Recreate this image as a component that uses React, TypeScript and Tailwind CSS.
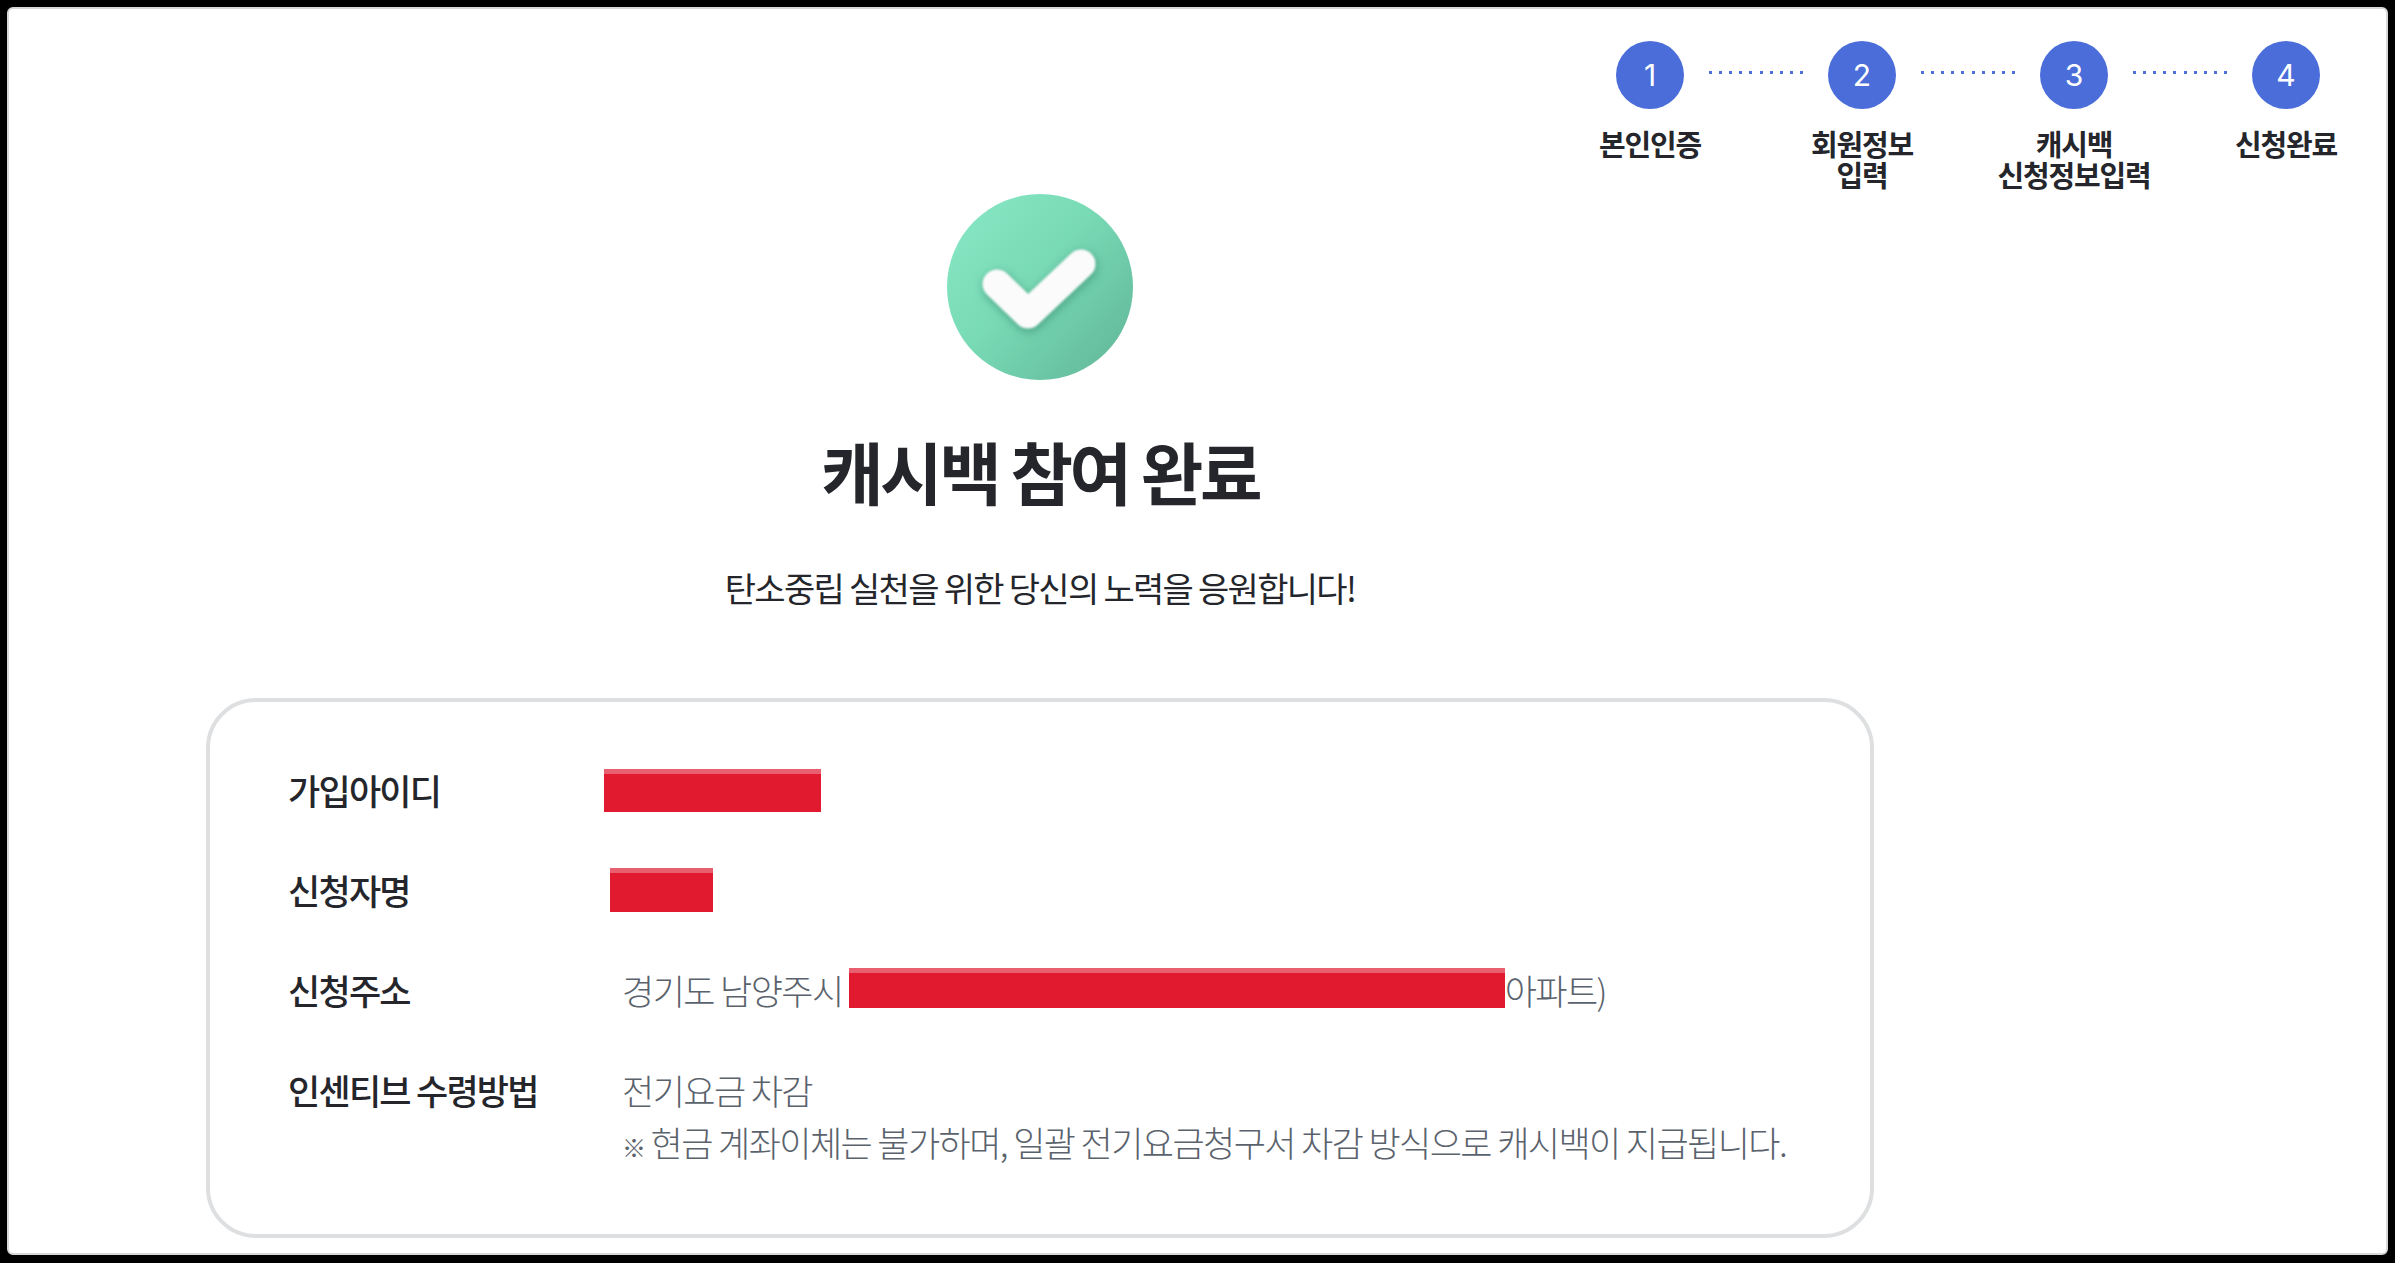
const font = { fontFamily: '"Noto Sans CJK KR", "Noto Sans", sans-serif' }

const steps = [
  { n: 1, label: ['본인인증'] },
  { n: 2, label: ['회원정보', '입력'] },
  { n: 3, label: ['캐시백', '신청정보입력'] },
  { n: 4, label: ['신청완료'] },
]

function Dots() {
  return (
    <div className="mt-[30px] mx-[25px] flex w-[94px] justify-between">
      {Array.from({ length: 10 }).map((_, i) => (
        <span key={i} className="size-[3px] bg-[#4b6fdb]" />
      ))}
    </div>
  )
}

function Stepper() {
  return (
    <div className="flex h-[184px] flex-col items-end pt-[32px] pr-[20px]">
      <div className="flex w-[796px] flex-col items-center">
        <div className="flex items-start">
          {steps.map((s, i) => (
            <div key={s.n} className="flex items-start">
              <div className="flex size-[68px] items-center justify-center rounded-full bg-[#4a6dd9] text-[30px] font-normal text-white">
                <span style={{ fontFamily: 'Inter, sans-serif' }}>{s.n}</span>
              </div>
              {i < 3 && <Dots />}
            </div>
          ))}
        </div>
        <div className="mt-[19px] flex gap-[52px]">
          {steps.map(s => (
            <div key={s.n} className="w-[160px] text-center text-[29px] leading-[31px] font-bold tracking-[-0.04em] text-[#24262b]">
              {s.label.map(l => (
                <div key={l}>{l}</div>
              ))}
            </div>
          ))}
        </div>
      </div>
    </div>
  )
}

function CheckBadge() {
  return (
    <svg width="188" height="188" viewBox="0 0 188 188">
      <defs>
        <linearGradient id="badge" x1="0.1" y1="0.1" x2="0.95" y2="0.85">
          <stop offset="0" stopColor="#86e6c3" />
          <stop offset="0.45" stopColor="#78d9b5" />
          <stop offset="1" stopColor="#64bb9c" />
        </linearGradient>
      </defs>
      <circle cx="94" cy="94" r="93" fill="url(#badge)" />
      <path d="M51 91 L82 121 L135 71" fill="none" stroke="#3b9274" strokeOpacity="0.6" strokeWidth="31" strokeLinecap="round" strokeLinejoin="round" className="blur-[4px]" transform="translate(1 3)" />
      <path d="M51 91 L82 121 L135 71" fill="none" stroke="#fbfbfb" strokeWidth="29" strokeLinecap="round" strokeLinejoin="round" className="blur-[1px]" />
    </svg>
  )
}

function Row({ label, children }: { label: string; children: React.ReactNode }) {
  return (
    <div className="flex items-start">
      <div className="w-[334px] shrink-0 text-[35px] leading-[53px] font-medium tracking-[-0.05em] text-[#24262b]">{label}</div>
      <div className="min-h-[53px] text-[35px] leading-[53px] font-light tracking-[-0.045em] text-[#5a626c]">{children}</div>
    </div>
  )
}

function Redact({ className }: { className: string }) {
  return <span className={`block border-t-[5px] border-[#e8606f] bg-[#e21a2f] ${className}`} />
}

export default function App() {
  return (
    <div className="h-[1263px] w-[2395px] overflow-hidden bg-black p-[7px]" style={font}>
      <div className="h-[1248px] w-[2381px] rounded-[6px] border-[2px] border-[#d8d8d8] bg-white">
        <Stepper />
        <main className="ml-[197px] flex w-[1668px] flex-col items-center">
          <CheckBadge />
          <h1 className="mt-[50px] text-[68px] leading-[80px] font-bold tracking-[-0.05em] text-[#24262b]">캐시백 참여 완료</h1>
          <p className="mt-[52px] text-[34px] leading-[50px] font-normal tracking-[-0.05em] text-[#24262b]">
            탄소중립 실천을 위한 당신의 노력을 응원합니다!
          </p>
          <section className="mt-[85px] flex h-[540px] w-full flex-col gap-[47px] rounded-[50px] border-[4px] border-[#dedfe0] pt-[61px] pl-[78px]">
            <Row label="가입아이디">
              <Redact className="mt-[6px] -ml-[18px] h-[43px] w-[217px]" />
            </Row>
            <Row label="신청자명">
              <Redact className="mt-[5px] -ml-[12px] h-[44px] w-[103px]" />
            </Row>
            <Row label="신청주소">
              경기도 남양주시 <Redact className="inline-block h-[40px] w-[656px] align-[-3px]" />아파트)
            </Row>
            <Row label="인센티브 수령방법">
              <div>전기요금 차감</div>
              <div className="-mt-[1px]">
                <span className="text-[24px]">※</span> 현금 계좌이체는 불가하며, 일괄 전기요금청구서 차감 방식으로 캐시백이 지급됩니다.
              </div>
            </Row>
          </section>
        </main>
      </div>
    </div>
  )
}
